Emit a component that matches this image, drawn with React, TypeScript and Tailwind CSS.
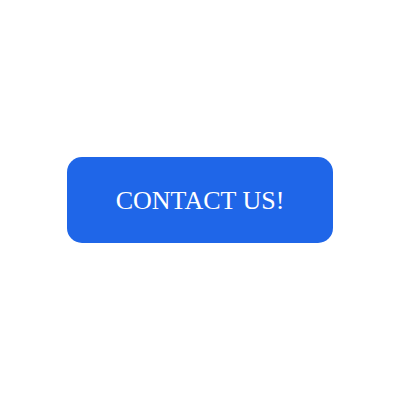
export default function App() {
  return (
    <div className="flex h-[400px] w-[400px] items-center justify-center bg-white">
      <button
        type="button"
        className="flex h-[86px] w-[266px] items-center justify-center rounded-[15px] bg-[#1f66e8] font-['Liberation_Serif',serif] text-[26px] text-white"
      >
        CONTACT US!
      </button>
    </div>
  );
}
